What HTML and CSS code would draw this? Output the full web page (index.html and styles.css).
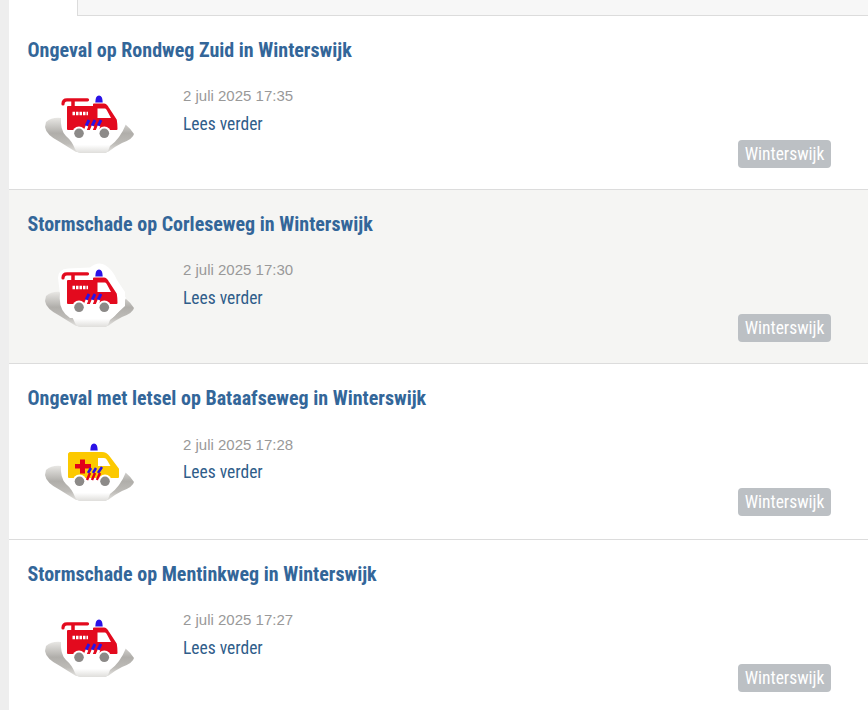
FILE: index.html
```html
<!DOCTYPE html>
<html lang="nl">
<head>
<meta charset="utf-8">
<title>Meldingen Winterswijk</title>
<link rel="stylesheet" href="styles.css">
</head>
<body>
<svg class="defs" width="0" height="0" aria-hidden="true">
  <defs>
    <linearGradient id="base" x1="0" y1="0" x2="0" y2="1">
      <stop offset="0" stop-color="#e8e7e4"/>
      <stop offset=".45" stop-color="#b0aeaa"/>
      <stop offset=".75" stop-color="#bdbbb7"/>
      <stop offset="1" stop-color="#e2e1de"/>
    </linearGradient>
    <linearGradient id="centre" x1="0" y1="0" x2="0" y2="1">
      <stop offset="0" stop-color="#fff"/>
      <stop offset=".8" stop-color="#fff"/>
      <stop offset="1" stop-color="#dfdedb"/>
    </linearGradient>
    <symbol id="ground" viewBox="30 85 120 80">
      <path fill="url(#base)" d="M46 122 Q52 117 61 118 L125 124 Q131 129 134 134 Q133 139 122 143 Q114 147 108 152 H76 Q68 147 60 142 Q46 135 45 127 Z"/>
      <path fill="url(#centre)" d="M61 117 Q60 130 66 136 Q72 141 75 149 Q77 153 80 153 H106 Q108 152 110 146 Q120 139 126 124 L118 112 H66 Z"/>
    </symbol>
    <symbol id="fire" viewBox="30 85 120 80">
      <path fill="#2a12e6" d="M95.300 102.500 Q95.300 95.500 99 95.500 Q102.700 95.500 102.700 102.500 Z"/>
      <path d="M63 104 Q63 99.800 67 99.800 H87.500" fill="none" stroke="#e30a1e" stroke-width="3.200" stroke-linecap="round"/>
      <path d="M73 100 V108" stroke="#e30a1e" stroke-width="3.500"/>
      <path fill="#e30a1e" stroke="#e30a1e" stroke-width="2" stroke-linejoin="round" d="M68 107 H94 V104.500 H104 Q106 104.500 108 108 L115.800 120 Q116.500 124 116.500 129 H68 Z"/>
      <path fill="#fff" d="M97.500 108.500 H105 Q106 108.500 107 110.500 L111 118 H97.500 Z"/>
      <path stroke="#fff" stroke-width="3.600" stroke-dasharray="2.500 1" d="M72.500 113.500 H88" fill="none"/>
      <path stroke="#2a12e6" stroke-width="2.800" d="M86 126 L89 120 M92 126 L95 120 M98 126 L101 120" fill="none"/>
      <path stroke="#fff" stroke-width="2.800" d="M84.500 132 L87 126 M90.500 132 L93 126 M96.500 132 L99 126" fill="none"/>
      <circle cx="79" cy="133.300" r="6.800" fill="#fff"/>
      <circle cx="104.300" cy="133.300" r="6.800" fill="#fff"/>
      <circle cx="79" cy="133.300" r="4.800" fill="#8c8a88"/>
      <circle cx="104.300" cy="133.300" r="4.800" fill="#8c8a88"/>
    </symbol>
    <symbol id="ambulance" viewBox="30 85 120 80">
      <path fill="#2a12e6" d="M90.300 102.500 Q90.300 95.500 94 95.500 Q97.700 95.500 97.700 102.500 Z"/>
      <path fill="#fcc900" stroke="#fcc900" stroke-width="2" stroke-linejoin="round" d="M70 105 H102 Q106 105 109 109 L118 121 V129 H69 V106 Z"/>
      <path fill="#fff" d="M98 110 H104 Q106 110 107 112 L110.500 118 H98 Z"/>
      <path fill="#e2001a" d="M80 111.500 H85 V116 H91 V120.500 H85 V125.500 H80 V120.500 H75 V116 H80 Z"/>
      <path stroke="#2a12e6" stroke-width="2.500" d="M88 125 L91 120 M93 125 L96 120 M98 125 L102 119" fill="none"/>
      <path stroke="#e2001a" stroke-width="2.500" d="M87 132 L90 125 M92 132 L95 125 M97 132 L100 125" fill="none"/>
      <circle cx="79.500" cy="133.300" r="6.800" fill="#fff"/>
      <circle cx="105" cy="133.300" r="6.800" fill="#fff"/>
      <circle cx="79.500" cy="133.300" r="4.800" fill="#8c8a88"/>
      <circle cx="105" cy="133.300" r="4.800" fill="#8c8a88"/>
    </symbol>
    <symbol id="halo" viewBox="30 85 120 80">
      <path fill="#fff" d="M58 104 Q58 95 68 94.500 L90 93.500 Q98 87 105 91 Q113 96 117 106 L125 118 V132 L112 144 H70 Q58 136 60 120 Z"/>
    </symbol>
  </defs>
</svg>
<main class="page">
  <div class="tabs"><div class="tab-active"></div><div class="tab-rest"></div></div>

  <article class="item">
    <h2 class="title">Ongeval op Rondweg Zuid in Winterswijk</h2>
    <div class="row">
      <svg class="icon" width="120" height="80"><use href="#ground"/><use href="#fire"/></svg>
      <div class="meta">
        <div class="date">2 juli 2025 17:35</div>
        <a class="more" href="#">Lees verder</a>
      </div>
      <span class="badge">Winterswijk</span>
    </div>
  </article>

  <article class="item item-alt">
    <h2 class="title">Stormschade op Corleseweg in Winterswijk</h2>
    <div class="row">
      <svg class="icon" width="120" height="80"><use href="#ground"/><use href="#halo"/><use href="#fire"/></svg>
      <div class="meta">
        <div class="date">2 juli 2025 17:30</div>
        <a class="more" href="#">Lees verder</a>
      </div>
      <span class="badge">Winterswijk</span>
    </div>
  </article>

  <article class="item item-tall">
    <h2 class="title">Ongeval met letsel op Bataafseweg in Winterswijk</h2>
    <div class="row">
      <svg class="icon" width="120" height="80"><use href="#ground"/><use href="#ambulance"/></svg>
      <div class="meta">
        <div class="date">2 juli 2025 17:28</div>
        <a class="more" href="#">Lees verder</a>
      </div>
      <span class="badge">Winterswijk</span>
    </div>
  </article>

  <article class="item">
    <h2 class="title">Stormschade op Mentinkweg in Winterswijk</h2>
    <div class="row">
      <svg class="icon" width="120" height="80"><use href="#ground"/><use href="#fire"/></svg>
      <div class="meta">
        <div class="date">2 juli 2025 17:27</div>
        <a class="more" href="#">Lees verder</a>
      </div>
      <span class="badge">Winterswijk</span>
    </div>
  </article>
</main>
</body>
</html>
```

FILE: styles.css
```css
html, body {
  margin: 0;
  padding: 0;
  height: 710px;
  overflow: hidden;
  background: #eeeeee;
}
.defs {
  position: absolute;
}
.page {
  margin-left: 9px;
  background: #fff;
  font-family: "Roboto Condensed", Roboto, sans-serif;
}
.tabs {
  display: flex;
  height: 16px;
}
.tab-active {
  width: 68px;
}
.tab-rest {
  flex: 1;
  background: #f7f7f7;
  border-left: 1px solid #dcdcdc;
  border-bottom: 1px solid #dcdcdc;
}
.item {
  box-sizing: border-box;
  height: 174px;
  padding: 22px 37px 0 18.5px;
  border-bottom: 1px solid #dcdcdc;
}
.item-alt {
  background: #f5f5f3;
}
.item-tall {
  height: 176px;
}
.title {
  margin: 0;
  font-size: 20px;
  line-height: 24px;
  font-weight: 700;
  color: #336699;
}
.row {
  display: flex;
  margin-top: 23px;
}
.icon {
  flex: none;
  margin-left: 2.5px;
  filter: blur(0.6px);
}
.meta {
  flex: 1;
  margin-left: 33px;
  margin-top: 1px;
}
.date {
  font-family: "Liberation Sans", Arial, sans-serif;
  font-size: 15px;
  line-height: 20px;
  color: #999999;
}
.item-tall .date {
  margin-top: 1px;
  margin-bottom: -1px;
}
.more {
  display: block;
  margin-top: 7px;
  font-size: 17.5px;
  line-height: 22px;
  color: #2f5d8a;
  text-decoration: none;
}
.badge {
  align-self: flex-end;
  box-sizing: border-box;
  width: 93px;
  height: 28px;
  margin-bottom: -3px;
  border-radius: 4px;
  background: #bcc0c4;
  color: #fff;
  font-size: 17.5px;
  line-height: 28px;
  text-align: center;
}
```
